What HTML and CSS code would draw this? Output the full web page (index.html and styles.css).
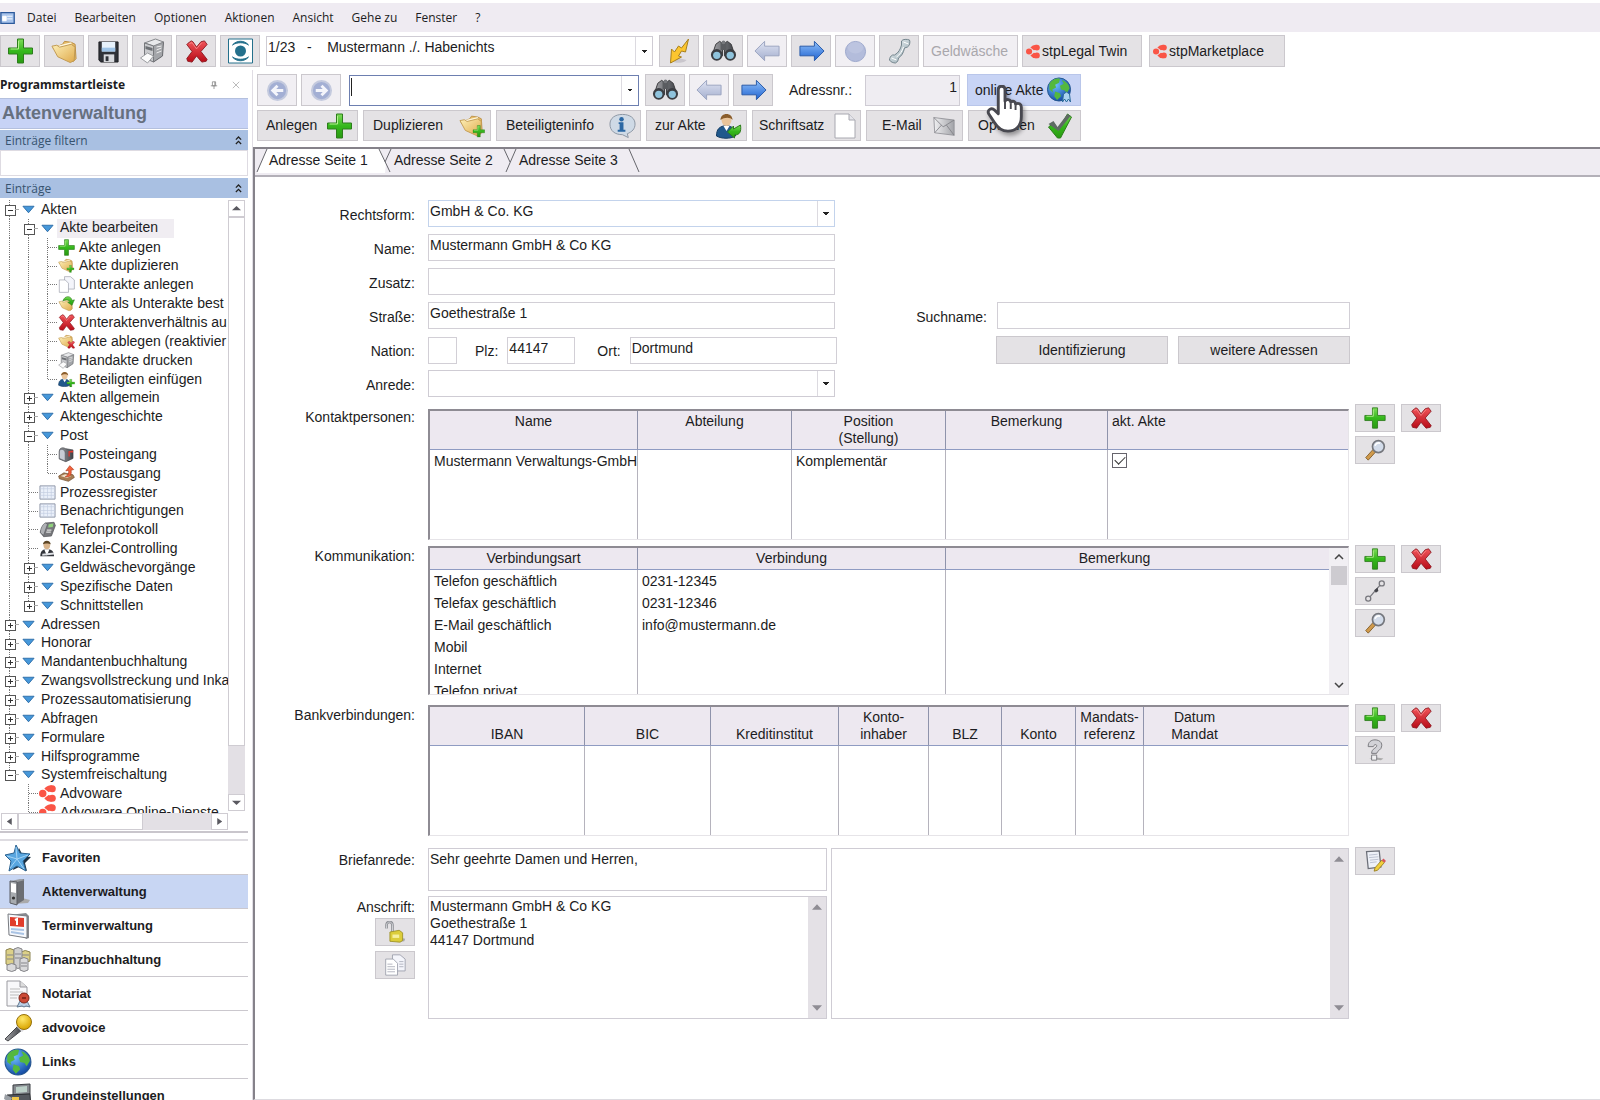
FILE: index.html
```html
<!DOCTYPE html>
<html lang="de">
<head>
  <meta charset="UTF-8">
  <meta name="viewport" content="width=device-width, initial-scale=1.0">
  <title>Aktenverwaltung</title>
  <link rel="stylesheet" href="styles.css">
</head>
<body>
  <!-- icon sprite -->
  <svg class="sprite" width="0" height="0" aria-hidden="true">
    <defs>
      <linearGradient id="gGreen" x1="0" y1="0" x2="0" y2="1"><stop offset="0" stop-color="#7fdc5a"/><stop offset=".5" stop-color="#35b81c"/><stop offset="1" stop-color="#2a9a12"/></linearGradient>
      <linearGradient id="gRed" x1="0" y1="0" x2="0" y2="1"><stop offset="0" stop-color="#f0555a"/><stop offset="1" stop-color="#b80c18"/></linearGradient>
      <linearGradient id="gFolder" x1="0" y1="0" x2="1" y2="1"><stop offset="0" stop-color="#fdf0b8"/><stop offset="1" stop-color="#dfa94a"/></linearGradient>
      <linearGradient id="gBlue" x1="0" y1="0" x2="0" y2="1"><stop offset="0" stop-color="#8fc0fa"/><stop offset="1" stop-color="#1f62d0"/></linearGradient>
      <linearGradient id="gPale" x1="0" y1="0" x2="0" y2="1"><stop offset="0" stop-color="#dfe3f2"/><stop offset="1" stop-color="#a4afcf"/></linearGradient>
      <linearGradient id="gGrey" x1="0" y1="0" x2="1" y2="0"><stop offset="0" stop-color="#f0f0f2"/><stop offset="1" stop-color="#a2a3a8"/></linearGradient>
      <linearGradient id="gDark" x1="0" y1="0" x2="1" y2="0"><stop offset="0" stop-color="#a4a4a8"/><stop offset="1" stop-color="#3e4146"/></linearGradient>
      <linearGradient id="gTube" x1="0" y1="0" x2="1" y2="1"><stop offset="0" stop-color="#f2f7f9"/><stop offset="1" stop-color="#8fa3ac"/></linearGradient>
      <radialGradient id="gSea" cx=".35" cy=".3" r=".8"><stop offset="0" stop-color="#6fc0ff"/><stop offset="1" stop-color="#0b3f9c"/></radialGradient>
      <radialGradient id="gGold" cx=".4" cy=".3" r=".7"><stop offset="0" stop-color="#ffe86a"/><stop offset="1" stop-color="#d9a400"/></radialGradient>
    </defs>
    <symbol id="plus" viewBox="0 0 26 26"><path d="M10 1h6v9h9v6h-9v9h-6v-9H1v-6h9z" fill="url(#gGreen)" stroke="#2d7d1c"/><path d="M11 3v8H3" fill="none" stroke="#b4f090"/></symbol>
    <symbol id="cross" viewBox="0 0 26 26"><path d="M3 4l4-3 2 1 4 6 5-6 4-1 3 4-7 8 7 9-1 2-5 1-6-7-5 7-5-1-1-3 6-8-6-8z" fill="url(#gRed)" stroke="#8a1820" stroke-linejoin="round"/><path d="M5 4l3-1 5 7 6-7" fill="none" stroke="#f99" stroke-width=".8"/></symbol>
    <symbol id="folder" viewBox="0 0 28 26"><path d="M2 10l10-4 2-3 7 1 4 2 1 15-3 3z" fill="#e8bd68" stroke="#b98e45"/><path d="M5 8l16-4 3 14-8 5z" fill="#fff7dc"/><path d="M1 8l5-1 3 2 12-3 4 3-1 14-4 2-13-6z" fill="url(#gFolder)" stroke="#c09850"/></symbol>
    <symbol id="folderPlus" viewBox="0 0 28 26"><use href="#folder" width="26" height="24"/><use href="#plus" x="14" y="12" width="13" height="13"/></symbol>
    <symbol id="folderCross" viewBox="0 0 28 26"><use href="#folder" width="26" height="24"/><use href="#cross" x="15" y="12" width="13" height="13"/></symbol>
    <symbol id="folderArrow" viewBox="0 0 28 26"><use href="#folder" y="3" width="26" height="23"/><path d="M8 9c3-10 14-9 15-1l4-1-4 9-7-5 4-1c-2-3-8-4-12-1z" fill="url(#gGreen)" stroke="#2d7d1c"/></symbol>
    <symbol id="floppy" viewBox="0 0 24 24"><path d="M2 2h20v21H4l-2-2z" fill="#2f3238" stroke="#1c1e22"/><path d="M5 2h14v10H5z" fill="#e6f1fb"/><path d="M5 8h14v4H5z" fill="#9ec4e8"/><path d="M7 15h11v8H7z" fill="#d8dade"/><path d="M9 17h3v5H9z" fill="#2f3238"/></symbol>
    <symbol id="printer" viewBox="0 0 26 26"><path d="M13 7l11-3-1 14-9 6z" fill="#a3a5a9" stroke="#66686c"/><path d="M5 5l11-4 8 3-10 4z" fill="#e8e9eb" stroke="#85878b"/><path d="M5 5l9 3v16l-9-4z" fill="#c9cacd" stroke="#77797d"/><path d="M6 8l7 2v3l-7-2z" fill="#6d7075"/><path d="M1 20l7-5 6 3-6 7z" fill="#fbfbfb" stroke="#9c9ea2"/><path d="M17 9l5-1M17 12l5-2M17 15l5-2" stroke="#eee"/></symbol>
    <symbol id="target" viewBox="0 0 26 26"><path d="M1 1h24v24H1z" fill="#fff" stroke="#24708c"/><circle cx="13" cy="13" r="5.500" fill="#24708c"/><path d="M5 7c4-5 12-5 16 0-4-3-12-3-16 0zM5 19c4 5 12 5 16 0-4 3-12 3-16 0z" fill="#24708c" stroke="#24708c"/></symbol>
    <symbol id="flash" viewBox="0 0 26 26"><path d="M7 24c6 2 12 0 13-2l-8-2z" fill="#c9c6cc"/><path d="M22 1l-3 13-4-1-3 5 3 1-11 6 1-14 3 3 4-6 3 2z" fill="#fcc62f" stroke="#a8801c" stroke-linejoin="round"/></symbol>
    <symbol id="binoc" viewBox="0 0 28 24"><path d="M6 5l4-3 3 2v13H2zM22 5l-4-3-3 2v13h11z" fill="url(#gDark)" stroke="#3a3a3c"/><path d="M11 3h6v8h-6z" fill="#5a5c60"/><circle cx="14" cy="3" r="2" fill="#77797d"/><circle cx="7" cy="16" r="6" fill="#3b3d42"/><circle cx="21" cy="16" r="6" fill="#3b3d42"/><circle cx="7" cy="16.500" r="3.800" fill="#8fc3dc"/><circle cx="21" cy="16.500" r="3.800" fill="#8fc3dc"/></symbol>
    <symbol id="left" viewBox="0 0 28 24"><path d="M1 12L11 2v5h15v10H11v5z" fill="url(#gPale)" stroke="#9aa3c0"/></symbol>
    <symbol id="right" viewBox="0 0 28 24"><path d="M27 12L17 2v5H2v10h15v5z" fill="url(#gBlue)" stroke="#2858a8"/></symbol>
    <symbol id="ball" viewBox="0 0 24 24"><circle cx="12" cy="12" r="10.500" fill="#b3bcdb" stroke="#9ba6cb"/><ellipse cx="12" cy="8" rx="8" ry="6" fill="#bcc4e0"/></symbol>
    <symbol id="back" viewBox="0 0 24 24"><circle cx="12" cy="12" r="10" fill="#a3afd4" stroke="#c4cade" stroke-width="2"/><path d="M18 12H8M12 7l-5 5 5 5" fill="none" stroke="#f4f5fb" stroke-width="3"/></symbol>
    <symbol id="forward" viewBox="0 0 24 24"><circle cx="12" cy="12" r="10" fill="#a3afd4" stroke="#c4cade" stroke-width="2"/><path d="M6 12h10M12 7l5 5-5 5" fill="none" stroke="#f4f5fb" stroke-width="3"/></symbol>
    <symbol id="phone" viewBox="0 0 26 26"><path d="M15 3c1-2 6-2 8-1 1 2 0 6-2 7l-3 1c-1 5-3 8-6 10 0 2-1 4-3 5-2 0-5-1-6-3 0-2 1-4 3-5l2 0c4-2 6-6 7-10z" fill="url(#gTube)" stroke="#74858d"/><path d="M17 4l5 2M5 20l5 2M17 9c-1 4-4 8-7 10" fill="none" stroke="#fff"/></symbol>
    <symbol id="stp" viewBox="0 0 16 16"><circle cx="3.500" cy="8" r="3.500"/><circle cx="12.500" cy="3.500" r="3.300"/><circle cx="12.500" cy="12.500" r="3.300"/><path d="M12 .2A8 8 0 0 0 5 3.500l4 3 4-1zM12 15.800A8 8 0 0 1 5 12.500l4-3 4 1z"/></symbol>
    <symbol id="globe" viewBox="0 0 26 26"><circle cx="13" cy="13" r="12" fill="url(#gSea)" stroke="#24568f"/><path d="M3 7c3-5 8-6 11-5l-1 4-4 2 1 3-4 2 1 3-4-3zM16 3c4 1 8 5 8 9l-3 5-2-3-4-1-1-4 4-2zM9 15l5 2 1 3-4 4-3-4z" fill="#54b83e"/></symbol>
    <symbol id="globeUser" viewBox="0 0 26 26"><use href="#globe" width="25" height="25"/><path d="M16 25l1-8 3-2 3 2 1 8-2-3-2 3-2-3z" fill="#a9d3f0" stroke="#2c6b9c"/></symbol>
    <symbol id="info" viewBox="0 0 28 26"><path d="M14 1c8 0 13 4 13 10 0 5-3 8-8 10l1 4-6-3C6 22 1 18 1 11 1 5 6 1 14 1z" fill="#cfdae6" stroke="#8a95a2"/><circle cx="13" cy="6" r="2.300" fill="#2b68a4"/><path d="M10 9h5v8h2v2h-8v-2h2v-6h-1z" fill="#2b68a4"/></symbol>
    <symbol id="user" viewBox="0 0 26 26"><path d="M1 23c0-7 3-9 7-10h5c5 1 7 4 7 10-5 3-14 3-19 0z" fill="#20588c" stroke="#153c62"/><path d="M8 13l3 5 3-5z" fill="#fff"/><ellipse cx="11" cy="7" rx="5" ry="6" fill="#e9c49a"/><path d="M5 7c0-8 12-8 12 0-2-3-8-3-12 0z" fill="#8a5d2c"/></symbol>
    <symbol id="userArrow" viewBox="0 0 26 26"><use href="#user" width="26" height="26"/><path d="M12 19l6-6v3l7-4c1 7-1 10-6 10v3z" fill="url(#gGreen)" stroke="#2d7d1c"/></symbol>
    <symbol id="userPlus" viewBox="0 0 26 26"><use href="#user" width="24" height="25"/><use href="#plus" x="13" y="12" width="13" height="13"/></symbol>
    <symbol id="suit" viewBox="0 0 26 26"><path d="M2 25c0-8 3-10 7-11h6c5 1 8 4 8 11z" fill="#33363c"/><path d="M8 14h8l-4 10z" fill="#fff"/><path d="M5 21l18-2v3L5 24z" fill="#e0e2e6"/><ellipse cx="12" cy="8" rx="5" ry="6" fill="#d9b48b"/><path d="M6 7c0-8 12-8 12 0-3-2-9-2-12 0z" fill="#5c4524"/></symbol>
    <symbol id="page" viewBox="0 0 22 26"><path d="M1 1h14l6 6v18H1z" fill="#fff" stroke="#a8a8b0"/><path d="M15 1v6h6" fill="#e4e4ea" stroke="#a8a8b0"/></symbol>
    <symbol id="pages" viewBox="0 0 26 26"><path d="M10 1h9l6 5v14H10z" fill="#f4f5fb" stroke="#989ba8"/><path d="M2 6h9l5 5v14H2z" fill="#fff" stroke="#989ba8"/></symbol>
    <symbol id="pagesText" viewBox="0 0 26 26"><use href="#pages" width="26" height="26"/><path d="M4 12h6M4 15h9M4 18h9M4 21h9M18 9h5M18 12h5M18 15h5" stroke="#a8abb8"/></symbol>
    <symbol id="mail" viewBox="0 0 26 24"><path d="M1 2l24 3v18L2 20z" fill="url(#gGrey)" stroke="#909096"/><path d="M1 2l11 11L25 5M2 20l8-9M25 23l-9-12" fill="none" stroke="#808086"/></symbol>
    <symbol id="check" viewBox="0 0 26 26"><path d="M2 14l5-4 5 6L21 1l4 3-11 21h-3z" fill="url(#gGreen)" stroke="#2d7d1c"/><path d="M2 11l5-3 4 6L21 1l3 2-12 15z" fill="#5f6b64"/></symbol>
    <symbol id="lens" viewBox="0 0 26 26"><path d="M2 22l9-10 3 3-9 10z" fill="#d09a4c" stroke="#7c5a28"/><circle cx="17" cy="9" r="7" fill="#d3dcea" stroke="#75777d" stroke-width="2"/><path d="M13 8c1-3 4-4 6-3" fill="none" stroke="#fff" stroke-width="2"/></symbol>
    <symbol id="connect" viewBox="0 0 26 26"><g fill="none" stroke="#77777d" stroke-width="1.500"><circle cx="5" cy="22" r="3"/><circle cx="21" cy="4" r="3"/><path d="M7 20L19 6"/></g><path d="M12 12l4-3 1 4-3 2z" fill="#44444a"/></symbol>
    <symbol id="question" viewBox="0 0 26 26"><path d="M6 23l14 2 3-2-8-1z" fill="#aaa"/><path d="M5 9C4-2 22-1 21 8c0 5-6 6-6 9H9c0-6 6-6 6-9 0-2-3-2-4 1z" fill="#d2d2d7" stroke="#6d6d72"/><path d="M9 19h6v6H9z" fill="#f0f0f2" stroke="#6d6d72"/></symbol>
    <symbol id="note" viewBox="0 0 26 26"><path d="M3 2l15-1 2 19-15 2z" fill="#eef1f8" stroke="#6c6f78" stroke-width="1.500"/><path d="M6 6l10-1M6 9l11-1M7 12l10-1M7 15l8-1" stroke="#b4bacb"/><path d="M13 21l8-9 3 3-8 9-4 1z" fill="#f0cf3c" stroke="#957b1e"/><path d="M21 12l2-2 3 3-2 2z" fill="#d8565c"/></symbol>
    <symbol id="lock" viewBox="0 0 26 26"><path d="M3 9V5c0-5 7-5 7 0v8" fill="none" stroke="#888a90" stroke-width="3"/><path d="M3 9V5c0-5 7-5 7 0v8" fill="none" stroke="#dfe0e4"/><path d="M16 25l8-1 1-3-4-1z" fill="#aaa"/><path d="M7 13l11-2 4 3v9l-3 2-12-1z" fill="#dccd3a" stroke="#9b8f24"/><path d="M10 16h8v4h-8z" fill="#f6f0a0"/></symbol>
    <symbol id="arrow" viewBox="0 0 14 9"><path d="M1 1h12L7 8z" fill="#4698da" stroke="#2c6ca8"/></symbol>
    <symbol id="grid" viewBox="0 0 18 16"><path d="M1 1h16v14H1z" fill="#eaf0fa" stroke="#8c94a6"/><path d="M1 4h16M1 8h16M1 11h16M5 1v14M9 1v14M13 1v14" stroke="#c3cde0" stroke-width=".7"/></symbol>
    <symbol id="mailbox" viewBox="0 0 26 26"><path d="M2 8c0-6 7-6 9-4l12 2v13l-11 5-10-4z" fill="url(#gDark)" stroke="#44464c"/><path d="M2 9c0-6 9-5 9 2v12l-9-4z" fill="#c8ccd4" stroke="#55585e"/><path d="M16 8l7-1v3h-5v6h-2z" fill="#e03a30"/></symbol>
    <symbol id="outbox" viewBox="0 0 26 26"><path d="M1 17l8-5 14 3 2 4-9 6-14-4z" fill="#a67c52" stroke="#6d4c2c"/><path d="M4 17l7-3 9 3-6 3z" fill="#efe0c8"/><path d="M11 18c5-2 6-6 5-10l-4 1 6-8 6 6-4 1c1 7-1 11-9 10z" fill="#f2623c" stroke="#b03a1c"/></symbol>
    <symbol id="telephone" viewBox="0 0 26 26"><path d="M2 17L10 3l13-1 2 5-6 16-12 1z" fill="#77787c" stroke="#4b4d52"/><path d="M2 18c0-6 4-14 8-15l3 2-6 17z" fill="#aeb0b4" stroke="#55575c"/><path d="M15 5l7-1-1 5-7 1z" fill="#8fd07c"/><path d="M12 14h7M11 17h7" stroke="#ddd" stroke-width="2"/></symbol>
    <symbol id="star" viewBox="0 0 28 28"><path d="M15 4l4 8 8 1-6 6 2 8-8-4-6 3z" fill="#1e3040"/><path d="M12 1l4 8 10 1-7 7 3 10-9-5-8 5 2-10-6-6 9-2z" fill="#58a6e0" stroke="#2b618f"/><path d="M12 3l1 12 11-4M13 15l7 10M13 15l-7 9M13 15L3 12" stroke="#a4d4f6" fill="none"/></symbol>
    <symbol id="binder" viewBox="0 0 24 28"><path d="M8 26l14-1 2-3-8-2z" fill="#aaa"/><path d="M10 3l8-2v21l-8 5z" fill="#6b6e73"/><path d="M5 3l9-2 5 1-8 2z" fill="#999ca0"/><path d="M4 3l7 1v23l-7-2z" fill="#a7abaf" stroke="#5a5d62"/><path d="M5 5l5 1v9l-5-1z" fill="#fff"/><circle cx="7.500" cy="20" r="1.600" fill="#333"/></symbol>
    <symbol id="calendar" viewBox="0 0 24 28"><path d="M3 3l17-2 3 3v22l-3 1z" fill="#888a90"/><path d="M2 2l19 2v22L3 23z" fill="#f6f8fc" stroke="#777a80"/><path d="M4 5l14 1v9L4 14z" fill="#e03c2c"/><path d="M9 8l2-1v6" stroke="#fff" stroke-width="2" fill="none"/><path d="M5 17l13 1M5 20l13 2" stroke="#a9c3e4" stroke-width="2"/></symbol>
    <symbol id="coins" viewBox="0 0 28 28"><path d="M2 4q4-3 8 0v14q-4 3-8 0zM17 6q4-3 9 0v9q-5 3-9 0z" fill="#dcd088" stroke="#8c8350"/><path d="M10 3q4-3 8 0v18q-4 3-8 0z" fill="#cfcfd0" stroke="#85858a"/><path d="M3 19q5-3 9 0v5q-4 3-9 0zM16 13q4-3 8 0v11q-4 3-8 0z" fill="#dadadc" stroke="#85858a"/><path d="M11 8h6M11 12h6M17 17h6M17 20h6M3 9h6M3 13h6M18 9h7" stroke="#85858a"/></symbol>
    <symbol id="seal" viewBox="0 0 26 28"><path d="M2 1h13l7 6v19H2z" fill="#f8f8fa" stroke="#9a9aa0"/><path d="M15 1v6h7" fill="#ddd" stroke="#9a9aa0"/><path d="M5 9h10M5 12h13M5 15h9M5 18h7" stroke="#bbb"/><path d="M15 21l-3 6 5-1 2 1 2-1 4 1-3-6z" fill="#b9cfe6" stroke="#61788f"/><circle cx="19" cy="18" r="5" fill="#cc4a36" stroke="#7e2418"/><path d="M17 17h4v2h-4z" fill="#8a2a1c"/></symbol>
    <symbol id="micro" viewBox="0 0 28 28"><path d="M14 12l4 4L4 27l-3-2z" fill="url(#gDark)" stroke="#44464a"/><path d="M12 12l6 6 3-3-6-6z" fill="#d9d9dd"/><circle cx="20" cy="8" r="7.500" fill="url(#gGold)" stroke="#96720c"/></symbol>
    <symbol id="tools" viewBox="0 0 28 28"><path d="M9 3l17-1v10l-17 1z" fill="#85898e" stroke="#3d4045"/><path d="M12 5l11-1v6l-11 1z" fill="#bcd0c8"/><path d="M3 13l23-1 1 14H1z" fill="#54585e" stroke="#2d2f33"/><path d="M8 15h7v8H8z" fill="#f0c748"/><path d="M1 12l7 4-2 4-6-3z" fill="#9ba0a6"/></symbol>
    <symbol id="app" viewBox="0 0 18 14"><path d="M1 1h15v12H1z" fill="#a8c4ec" stroke="#2c5a9c" stroke-width="1.500"/><path d="M3 5h4v5H3zM8 5h6M8 8h6" fill="#fff" stroke="#fff"/></symbol>
  </svg>

  <nav class="menubar">
    <svg class="app-icon"><use href="#app"/></svg>
    <a href="#">Datei</a>
    <a href="#">Bearbeiten</a>
    <a href="#">Optionen</a>
    <a href="#">Aktionen</a>
    <a href="#">Ansicht</a>
    <a href="#">Gehe zu</a>
    <a href="#">Fenster</a>
    <a href="#">?</a>
  </nav>

  <div class="toolbar toolbar-top">
    <button class="tool" aria-label="Neu"><svg><use href="#plus"/></svg></button>
    <button class="tool" aria-label="Öffnen"><svg><use href="#folder"/></svg></button>
    <button class="tool" aria-label="Speichern"><svg class="small"><use href="#floppy"/></svg></button>
    <button class="tool" aria-label="Drucken"><svg><use href="#printer"/></svg></button>
    <button class="tool" aria-label="Löschen"><svg class="small"><use href="#cross"/></svg></button>
    <button class="tool" aria-label="Fokus"><svg><use href="#target"/></svg></button>
    <div class="combo combo-file">
      <select aria-label="Akte"><option>1/23&nbsp;&nbsp; -&nbsp;&nbsp;&nbsp; Mustermann ./. Habenichts</option></select>
    </div>
    <button class="tool" aria-label="Sprung"><svg><use href="#flash"/></svg></button>
    <button class="tool" aria-label="Suchen"><svg><use href="#binoc"/></svg></button>
    <button class="tool off" aria-label="Zurück" disabled><svg><use href="#left"/></svg></button>
    <button class="tool" aria-label="Weiter"><svg><use href="#right"/></svg></button>
    <button class="tool off" aria-label="Status" disabled><svg class="small"><use href="#ball"/></svg></button>
    <button class="tool" aria-label="Telefon"><svg><use href="#phone"/></svg></button>
    <button class="tool-text money off" disabled>Geldwäsche</button>
    <button class="tool-text twin"><svg class="stp"><use href="#stp"/></svg>stpLegal Twin</button>
    <button class="tool-text market"><svg class="stp"><use href="#stp"/></svg>stpMarketplace</button>
  </div>

  <div class="workspace">
    <aside class="sidebar">
      <header class="side-head">
        <h2>Programmstartleiste</h2>
        <svg class="pin" viewBox="0 0 10 10"><path d="M3 1h4v5H3zM6 1v5M1 6h8M5 6v4" fill="none" stroke="#888"/></svg>
        <svg class="close" viewBox="0 0 10 10"><path d="M1 1l8 8M9 1l-8 8" stroke="#aaa"/></svg>
      </header>
      <h1 class="side-title">Aktenverwaltung</h1>
      <div class="side-bar"><label for="filter">Einträge filtern</label><svg viewBox="0 0 8 10"><path d="M1 4l3-3 3 3M1 9l3-3 3 3" fill="none" stroke="#222" stroke-width="1.500"/></svg></div>
      <input class="filter" id="filter" type="text">
      <div class="side-bar"><span>Einträge</span><svg viewBox="0 0 8 10"><path d="M1 4l3-3 3 3M1 9l3-3 3 3" fill="none" stroke="#222" stroke-width="1.500"/></svg></div>

      <div class="tree-box">
        <div class="tree-view">
          <ul class="tree">
            <li><button class="toggle open first" aria-label="Zuklappen"></button><svg><use href="#arrow"/></svg><span>Akten</span></li>
            <li><i class="line"></i><button class="toggle open" aria-label="Zuklappen"></button><svg><use href="#arrow"/></svg><span class="current">Akte bearbeiten</span></li>
            <li><i class="line"></i><i class="line"></i><i class="elbow"></i><svg class="big"><use href="#plus"/></svg><span>Akte anlegen</span></li>
            <li><i class="line"></i><i class="line"></i><i class="elbow"></i><svg class="big"><use href="#folderPlus"/></svg><span>Akte duplizieren</span></li>
            <li><i class="line"></i><i class="line"></i><i class="elbow"></i><svg class="big"><use href="#pages"/></svg><span>Unterakte anlegen</span></li>
            <li><i class="line"></i><i class="line"></i><i class="elbow"></i><svg class="big"><use href="#folderArrow"/></svg><span>Akte als Unterakte best</span></li>
            <li><i class="line"></i><i class="line"></i><i class="elbow"></i><svg class="big"><use href="#cross"/></svg><span>Unteraktenverhältnis au</span></li>
            <li><i class="line"></i><i class="line"></i><i class="elbow"></i><svg class="big"><use href="#folderCross"/></svg><span>Akte ablegen (reaktivier</span></li>
            <li><i class="line"></i><i class="line"></i><i class="elbow"></i><svg class="big"><use href="#printer"/></svg><span>Handakte drucken</span></li>
            <li><i class="line"></i><i class="line"></i><i class="elbow last"></i><svg class="big"><use href="#userPlus"/></svg><span>Beteiligten einfügen</span></li>
            <li><i class="line"></i><button class="toggle" aria-label="Aufklappen"></button><svg><use href="#arrow"/></svg><span>Akten allgemein</span></li>
            <li><i class="line"></i><button class="toggle" aria-label="Aufklappen"></button><svg><use href="#arrow"/></svg><span>Aktengeschichte</span></li>
            <li><i class="line"></i><button class="toggle open" aria-label="Zuklappen"></button><svg><use href="#arrow"/></svg><span>Post</span></li>
            <li><i class="line"></i><i class="line"></i><i class="elbow"></i><svg class="big"><use href="#mailbox"/></svg><span>Posteingang</span></li>
            <li><i class="line"></i><i class="line"></i><i class="elbow last"></i><svg class="big"><use href="#outbox"/></svg><span>Postausgang</span></li>
            <li><i class="line"></i><i class="elbow"></i><svg class="big"><use href="#grid"/></svg><span>Prozessregister</span></li>
            <li><i class="line"></i><i class="elbow"></i><svg class="big"><use href="#grid"/></svg><span>Benachrichtigungen</span></li>
            <li><i class="line"></i><i class="elbow"></i><svg class="big"><use href="#telephone"/></svg><span>Telefonprotokoll</span></li>
            <li><i class="line"></i><i class="elbow"></i><svg class="big"><use href="#suit"/></svg><span>Kanzlei-Controlling</span></li>
            <li><i class="line"></i><button class="toggle" aria-label="Aufklappen"></button><svg><use href="#arrow"/></svg><span>Geldwäschevorgänge</span></li>
            <li><i class="line"></i><button class="toggle" aria-label="Aufklappen"></button><svg><use href="#arrow"/></svg><span>Spezifische Daten</span></li>
            <li><i class="line"></i><button class="toggle end" aria-label="Aufklappen"></button><svg><use href="#arrow"/></svg><span>Schnittstellen</span></li>
            <li><button class="toggle" aria-label="Aufklappen"></button><svg><use href="#arrow"/></svg><span>Adressen</span></li>
            <li><button class="toggle" aria-label="Aufklappen"></button><svg><use href="#arrow"/></svg><span>Honorar</span></li>
            <li><button class="toggle" aria-label="Aufklappen"></button><svg><use href="#arrow"/></svg><span>Mandantenbuchhaltung</span></li>
            <li><button class="toggle" aria-label="Aufklappen"></button><svg><use href="#arrow"/></svg><span>Zwangsvollstreckung und Inka</span></li>
            <li><button class="toggle" aria-label="Aufklappen"></button><svg><use href="#arrow"/></svg><span>Prozessautomatisierung</span></li>
            <li><button class="toggle" aria-label="Aufklappen"></button><svg><use href="#arrow"/></svg><span>Abfragen</span></li>
            <li><button class="toggle" aria-label="Aufklappen"></button><svg><use href="#arrow"/></svg><span>Formulare</span></li>
            <li><button class="toggle" aria-label="Aufklappen"></button><svg><use href="#arrow"/></svg><span>Hilfsprogramme</span></li>
            <li><button class="toggle open end" aria-label="Zuklappen"></button><svg><use href="#arrow"/></svg><span>Systemfreischaltung</span></li>
            <li><i></i><i class="elbow"></i><svg class="big stp"><use href="#stp"/></svg><span>Advoware</span></li>
            <li><i></i><i class="elbow"></i><svg class="big stp"><use href="#stp"/></svg><span>Advoware Online-Dienste</span></li>
          </ul>
        </div>
        <div class="vscroll"><i class="cap up"></i><i class="thumb"></i><i class="track"></i><i class="cap down"></i></div>
        <div class="hscroll"><i class="cap prev"></i><i class="thumb"></i><i class="track"></i><i class="cap next"></i></div>
      </div>

      <nav class="modules">
        <a href="#"><svg><use href="#star"/></svg>Favoriten</a>
        <a href="#" class="active"><svg><use href="#binder"/></svg>Aktenverwaltung</a>
        <a href="#"><svg><use href="#calendar"/></svg>Terminverwaltung</a>
        <a href="#"><svg><use href="#coins"/></svg>Finanzbuchhaltung</a>
        <a href="#"><svg><use href="#seal"/></svg>Notariat</a>
        <a href="#"><svg><use href="#micro"/></svg>advovoice</a>
        <a href="#"><svg><use href="#globe"/></svg>Links</a>
        <a href="#"><svg><use href="#tools"/></svg>Grundeinstellungen</a>
      </nav>
    </aside>

    <main class="main">
      <div class="toolbar toolbar-search">
        <button class="tool off" aria-label="Zurück" disabled><svg class="small"><use href="#back"/></svg></button>
        <button class="tool off" aria-label="Vor" disabled><svg class="small"><use href="#forward"/></svg></button>
        <div class="combo combo-search"><input type="text" aria-label="Adresse suchen"></div>
        <button class="tool" aria-label="Suchen"><svg><use href="#binoc"/></svg></button>
        <button class="tool off" aria-label="Vorherige" disabled><svg><use href="#left"/></svg></button>
        <button class="tool" aria-label="Nächste"><svg><use href="#right"/></svg></button>
        <label class="nr-label" for="nr">Adressnr.:</label>
        <input class="nr" id="nr" type="text" value="1" readonly>
        <div class="online">
          <button class="tool-text hover">online Akte<svg><use href="#globeUser"/></svg></button>
          <svg class="pointer" viewBox="0 0 38 50"><path d="M12 5c0-5 7-5 7 0v12c1-3 6-2 6 1 2-2 5-1 5 2 3-2 6 0 6 3v10c0 10-6 15-14 15-7 0-11-4-14-9L2 30c-2-4 3-7 6-4l4 4z" fill="#fff" stroke="#484850" stroke-width="3" stroke-linejoin="round"/><path d="M19 17v8M25 19v6M30 21v5" stroke="#484850" stroke-width="2"/></svg>
        </div>
      </div>
      <div class="toolbar toolbar-actions">
        <button class="tool-text w1">Anlegen<svg><use href="#plus"/></svg></button>
        <button class="tool-text w2">Duplizieren<svg><use href="#folderPlus"/></svg></button>
        <button class="tool-text w3">Beteiligteninfo<svg><use href="#info"/></svg></button>
        <button class="tool-text w1">zur Akte<svg><use href="#userArrow"/></svg></button>
        <button class="tool-text w4">Schriftsatz<svg><use href="#page"/></svg></button>
        <button class="tool-text w5">E-Mail<svg><use href="#mail"/></svg></button>
        <button class="tool-text w6">Optionen<svg><use href="#check"/></svg></button>
      </div>

      <div class="panel">
        <div class="tabs">
          <svg class="edge first" viewBox="0 0 14 24"><path d="M14 0v24H2L12 0z" fill="#fff"/><path d="M2 23L12 0" stroke="#66666c" fill="none"/></svg>
          <button class="tab active">Adresse Seite 1</button>
          <svg class="edge" viewBox="0 0 14 24"><path d="M0 0h2l6 15-1 9H0z" fill="#fff"/><path d="M1 0l11 23M13 0L7 13" stroke="#66666c" fill="none"/></svg>
          <button class="tab">Adresse Seite 2</button>
          <svg class="edge" viewBox="0 0 14 24"><path d="M1 0l6 13M13 0L3 23" stroke="#66666c" fill="none"/></svg>
          <button class="tab">Adresse Seite 3</button>
          <svg class="edge" viewBox="0 0 14 24"><path d="M1 0l10 23" stroke="#66666c" fill="none"/></svg>
        </div>

        <form class="form">
          <div class="row">
            <label for="rechtsform">Rechtsform:</label>
            <div class="fields"><div class="combo focus"><select id="rechtsform"><option>GmbH &amp; Co. KG</option></select></div></div>
          </div>
          <div class="row">
            <label for="name">Name:</label>
            <div class="fields"><input id="name" type="text" value="Mustermann GmbH &amp; Co KG"></div>
          </div>
          <div class="row">
            <label for="zusatz">Zusatz:</label>
            <div class="fields"><input id="zusatz" type="text"></div>
          </div>
          <div class="row">
            <label for="strasse">Straße:</label>
            <div class="fields"><input id="strasse" type="text" value="Goethestraße 1"></div>
            <div class="side">
              <label for="suchname">Suchname:</label>
              <input id="suchname" type="text">
            </div>
          </div>
          <div class="row">
            <label for="nation">Nation:</label>
            <div class="fields wide">
              <input class="nation" id="nation" type="text">
              <label for="plz">Plz:</label>
              <input class="plz" id="plz" type="text" value="44147">
              <label class="ort-label" for="ort">Ort:</label>
              <input class="ort" id="ort" type="text" value="Dortmund">
            </div>
            <div class="side">
              <button type="button" class="plain">Identifizierung</button>
              <button type="button" class="plain">weitere Adressen</button>
            </div>
          </div>
          <div class="row">
            <label for="anrede">Anrede:</label>
            <div class="fields"><div class="combo"><select id="anrede"><option></option></select></div></div>
          </div>

          <div class="block contacts">
            <div class="caption">Kontaktpersonen:</div>
            <div class="grid-box">
              <table>
                <colgroup><col class="c208"><col class="c154"><col class="c154"><col class="c162"><col></colgroup>
                <thead><tr><th>Name</th><th>Abteilung</th><th>Position<br>(Stellung)</th><th>Bemerkung</th><th class="start">akt. Akte</th></tr></thead>
                <tbody>
                  <tr><td>Mustermann Verwaltungs-GmbH</td><td></td><td>Komplementär</td><td></td><td><input type="checkbox" aria-label="akt. Akte" checked></td></tr>
                  <tr class="rest"><td></td><td></td><td></td><td></td><td></td></tr>
                </tbody>
              </table>
            </div>
            <div class="acts">
              <button type="button" aria-label="Hinzufügen"><svg><use href="#plus"/></svg></button>
              <button type="button" aria-label="Entfernen"><svg><use href="#cross"/></svg></button>
              <button type="button" aria-label="Ansehen"><svg><use href="#lens"/></svg></button>
            </div>
          </div>

          <div class="block comms">
            <div class="caption">Kommunikation:</div>
            <div class="grid-box">
              <table>
                <colgroup><col class="c208"><col class="c308"><col></colgroup>
                <thead><tr><th>Verbindungsart</th><th>Verbindung</th><th class="remark">Bemerkung</th></tr></thead>
                <tbody>
                  <tr><td>Telefon geschäftlich</td><td>0231-12345</td><td></td></tr>
                  <tr><td>Telefax geschäftlich</td><td>0231-12346</td><td></td></tr>
                  <tr><td>E-Mail geschäftlich</td><td>info@mustermann.de</td><td></td></tr>
                  <tr><td>Mobil</td><td></td><td></td></tr>
                  <tr><td>Internet</td><td></td><td></td></tr>
                  <tr><td>Telefon privat</td><td></td><td></td></tr>
                </tbody>
              </table>
              <div class="flatscroll">
                <svg viewBox="0 0 10 6"><path d="M1 5l4-4 4 4" fill="none" stroke="#444" stroke-width="1.500"/></svg>
                <i></i>
                <svg class="bottom" viewBox="0 0 10 6"><path d="M1 1l4 4 4-4" fill="none" stroke="#444" stroke-width="1.500"/></svg>
              </div>
            </div>
            <div class="acts">
              <button type="button" aria-label="Hinzufügen"><svg><use href="#plus"/></svg></button>
              <button type="button" aria-label="Entfernen"><svg><use href="#cross"/></svg></button>
              <button type="button" class="solo" aria-label="Verbinden"><svg><use href="#connect"/></svg></button>
              <button type="button" aria-label="Ansehen"><svg><use href="#lens"/></svg></button>
            </div>
          </div>

          <div class="block bank">
            <div class="caption">Bankverbindungen:</div>
            <div class="grid-box">
              <table>
                <colgroup><col class="c155"><col class="c126"><col class="c128"><col class="c90"><col class="c73"><col class="c74"><col class="c68"><col></colgroup>
                <thead><tr><th>IBAN</th><th>BIC</th><th>Kreditinstitut</th><th>Konto-<br>inhaber</th><th>BLZ</th><th>Konto</th><th>Mandats-<br>referenz</th><th class="date">Datum<br>Mandat</th></tr></thead>
                <tbody><tr class="rest"><td></td><td></td><td></td><td></td><td></td><td></td><td></td><td></td></tr></tbody>
              </table>
            </div>
            <div class="acts">
              <button type="button" aria-label="Hinzufügen"><svg><use href="#plus"/></svg></button>
              <button type="button" aria-label="Entfernen"><svg><use href="#cross"/></svg></button>
              <button type="button" aria-label="Hilfe"><svg><use href="#question"/></svg></button>
            </div>
          </div>

          <div class="block letter">
            <div class="caption">
              <label class="brief-label" for="brief">Briefanrede:</label>
              <label for="anschrift">Anschrift:</label>
              <button type="button" aria-label="Entsperren"><svg><use href="#lock"/></svg></button>
              <button type="button" aria-label="Kopieren"><svg><use href="#pagesText"/></svg></button>
            </div>
            <div class="texts">
              <div class="texts-left">
                <textarea class="brief" id="brief">Sehr geehrte Damen und Herren,</textarea>
                <div class="memo">
                  <textarea id="anschrift">Mustermann GmbH &amp; Co KG
Goethestraße 1
44147 Dortmund</textarea>
                  <div class="memo-scroll"><i class="up"></i><i class="down"></i></div>
                </div>
              </div>
              <div class="memo">
                <textarea aria-label="Notiz"></textarea>
                <div class="memo-scroll"><i class="up"></i><i class="down"></i></div>
              </div>
            </div>
            <div class="acts">
              <button type="button" aria-label="Bearbeiten"><svg><use href="#note"/></svg></button>
            </div>
          </div>
        </form>
      </div>
    </main>
  </div>
</body>
</html>
```

FILE: styles.css
```css
* {
  box-sizing: border-box;
}

body {
  margin: 0;
  height: 100vh;
  display: flex;
  flex-direction: column;
  overflow: hidden;
  background: #fff;
  color: #1c1c22;
  font-family: "Liberation Sans", Arial, sans-serif;
  font-size: 14px;
  line-height: 17px;
}

button,
input,
select,
textarea {
  font: inherit;
  color: inherit;
  margin: 0;
  border-radius: 0;
}

a {
  color: inherit;
  text-decoration: none;
}

.sprite {
  position: absolute;
}

/* menu */
.menubar {
  display: flex;
  align-items: center;
  gap: 18px;
  height: 29px;
  flex: none;
  margin-top: 3px;
  background: #efebf2;
  font-family: "Open Sans", "Noto Sans", sans-serif;
  font-size: 12px;
}

.app-icon {
  width: 16px;
  height: 14px;
  margin-right: -7px;
}

/* toolbars */
.toolbar {
  display: flex;
  align-items: center;
  gap: 4px;
  flex: none;
}

.toolbar-top {
  padding: 3px 0;
}

.tool,
.tool-text,
.plain,
.acts button,
.caption button {
  display: flex;
  align-items: center;
  justify-content: center;
  padding: 0;
  border: 1px solid #cbc8cd;
  background: #e4e2e5;
}

.tool {
  width: 40px;
  height: 32px;
  flex: none;
}

.tool svg,
.tool-text svg {
  width: 27px;
  height: 26px;
}

.tool .small {
  height: 23px;
}

.tool-text {
  height: 32px;
  justify-content: space-between;
  padding: 0 4px 0 8px;
  white-space: nowrap;
}

.tool.off,
.tool-text.off {
  background: #f1eff3;
  color: #a9a7ac;
}

.money {
  width: 95px;
  padding: 0 7px;
}

.stp {
  fill: #fa5546;
}

.tool-text .stp {
  width: 14px;
  height: 15px;
}

.twin,
.market {
  justify-content: flex-start;
  gap: 2px;
  padding-left: 3px;
}

.twin {
  width: 120px;
}

.market {
  width: 136px;
  margin-left: 3px;
}

.combo {
  position: relative;
  display: flex;
  border: 1px solid #cfccd4;
  background: #fff;
}

/* drop-down arrow with its divider */
.combo::after {
  content: "";
  position: absolute;
  top: 0;
  bottom: 0;
  right: 0;
  width: 16px;
  border-left: 1px solid #dcdae0;
  background: conic-gradient(from -45deg at 50% 100%, #222 90deg, transparent 0) center / 6px 3px no-repeat;
  pointer-events: none;
}

.combo select,
.combo input {
  appearance: none;
  flex: 1;
  min-width: 0;
  border: 0;
  background: none;
  padding: 0 18px 4px 1px;
  outline: 0;
}

.combo-file {
  width: 387px;
  height: 30px;
  margin: 0 2px;
}

.combo-file select {
  padding-bottom: 7px;
}

.combo-search {
  width: 290px;
  height: 31px;
  margin: 0 2px 0 4px;
  border-color: #6d7fb0;
}

.combo-search::before {
  content: "";
  width: 1px;
  height: 18px;
  margin: 2px 0 0 1px;
  background: #222;
}

.focus {
  border-color: #c3d3ec;
}

.toolbar-search {
  height: 32px;
  margin: 4px 0 4px 4px;
}

.nr-label {
  margin: 0 9px 0 12px;
}

.nr {
  width: 95px;
  height: 31px;
  padding: 0 2px 7px;
  border: 1px solid #cfccd4;
  background: #efedf2;
  text-align: right;
}

.online {
  position: relative;
}

.online .tool-text {
  width: 114px;
  margin-left: 3px;
  padding-left: 7px;
}

.hover {
  background: #c8d4f5;
  border-color: #b9c6ea;
}

.pointer {
  position: absolute;
  left: 22px;
  top: 11px;
  width: 38px;
  height: 48px;
  filter: drop-shadow(2px 3px 2px rgba(0, 0, 0, 0.35));
  z-index: 2;
}

.toolbar-actions {
  margin-left: 4px;
  gap: 5px;
}

.toolbar-actions .tool-text {
  height: 31px;
}

.w1 { width: 101px; }
.w2 { width: 128px; }
.w3 { width: 145px; }
.w4 { width: 109px; }
.w5 { width: 97px; }
.w6 { width: 113px; }

.toolbar-actions .w2,
.toolbar-actions .w3,
.toolbar-actions .w6 {
  padding-left: 9px;
}

.toolbar-actions .w5 {
  padding-left: 15px;
}

.toolbar-actions .w4 {
  padding-left: 6px;
}

.w6 svg,
.hover svg,
.w5 svg {
  margin-right: 3px;
}

.w5 svg,
.w4 svg {
  width: 22px;
}

/* workspace */
.workspace {
  display: flex;
  flex: 1;
  min-height: 0;
}

.sidebar {
  display: flex;
  flex-direction: column;
  width: 253px;
  flex: none;
  padding-right: 4px;
  border-right: 1px solid #e0dde4;
  overflow: hidden;
}

.side-head {
  display: flex;
  align-items: center;
  height: 28px;
  flex: none;
  padding: 2px 8px 0 0;
}

.side-head h2 {
  flex: 1;
  margin: 0;
  font: bold 12px/18px "Noto Sans", sans-serif;
}

.side-head svg {
  width: 8px;
  height: 8px;
  margin-left: 14px;
}

.side-title {
  flex: none;
  height: 31px;
  margin: 0 0 1px;
  padding: 4px 2px;
  border: 1px solid #b4c0de;
  border-width: 1px 0;
  background: #c7d3f6;
  color: #66707f;
  font-size: 18px;
  line-height: 21px;
}

.side-bar {
  display: flex;
  align-items: center;
  justify-content: space-between;
  height: 20px;
  flex: none;
  padding: 0 6px 0 5px;
  background: #a9c0e2;
  color: #37536f;
  font-family: "Open Sans", "Noto Sans", sans-serif;
  font-size: 12px;
}

.side-bar svg {
  width: 7px;
  height: 9px;
}

.filter {
  height: 26px;
  flex: none;
  margin-bottom: 2px;
  border: 1px solid #dedbe2;
}

.tree-box {
  display: grid;
  grid-template: minmax(0, 1fr) 18px / minmax(0, 1fr) 20px;
  height: 635px;
  flex: none;
  border-bottom: 2px solid #c9c6cc;
}

.tree-view {
  overflow: hidden;
  padding-top: 2px;
}

.tree {
  display: grid;
  grid-auto-rows: 1fr;
  height: 622px;
  margin: 0;
  padding: 0;
  list-style: none;
  white-space: nowrap;
}

.tree li {
  display: flex;
  align-items: center;
  min-height: 0;
}

.tree svg {
  width: 13px;
  height: 9px;
  margin: 0 3px;
  flex: none;
}

.tree .big {
  width: 17px;
  height: 17px;
  margin: 0 1px;
}

.tree span {
  padding-left: 3px;
}

.tree .current {
  align-self: stretch;
  padding-right: 16px;
  background: #f0edf2;
}

.tree i,
.toggle {
  position: relative;
  align-self: stretch;
  width: 19px;
  flex: none;
}

.tree .line,
.tree .elbow,
.toggle {
  background: repeating-linear-gradient(#777 0 1px, transparent 1px 2px) 9px 0 / 1px 100% no-repeat;
}

.tree .last,
.tree .end {
  background-size: 1px 50%;
}

.tree .first {
  background-position: 9px 100%;
}

.tree .elbow::after {
  content: "";
  position: absolute;
  left: 10px;
  right: 0;
  top: 9px;
  height: 1px;
  background: repeating-linear-gradient(90deg, #777 0 1px, transparent 1px 2px);
}

.toggle {
  border: 0;
  padding: 0;
}

.toggle::before {
  content: "";
  position: absolute;
  left: 5px;
  top: 5px;
  width: 9px;
  height: 9px;
  border: 1px solid #555;
  background: linear-gradient(#333, #333) center / 5px 1px no-repeat, linear-gradient(#333, #333) center / 1px 5px no-repeat, #fff;
}

.toggle.open::before {
  background: linear-gradient(#333, #333) center / 5px 1px no-repeat, #fff;
}

.toggle::after {
  content: "";
  position: absolute;
  left: 15px;
  right: 0;
  top: 9px;
  height: 1px;
  background: #aaa;
}

/* classic scroll bars */
.vscroll,
.hscroll {
  display: flex;
  background: #e3e0e5;
}

.vscroll {
  flex-direction: column;
  width: 17px;
  margin: 2px 3px 2px 0;
}

.hscroll {
  margin-left: 1px;
  height: 17px;
}

.cap {
  position: relative;
  width: 17px;
  height: 17px;
  flex: none;
  border: 1px solid #cfccd2;
  background: #fff;
}

.cap::after {
  content: "";
  position: absolute;
  inset: 4px 3px;
  background: #5a5960;
}

.up::after { clip-path: polygon(50% 15%, 100% 75%, 0 75%); }
.down::after { clip-path: polygon(0 25%, 100% 25%, 50% 85%); }
.prev::after { clip-path: polygon(75% 0, 75% 100%, 20% 50%); }
.next::after { clip-path: polygon(25% 0, 80% 50%, 25% 100%); }

.thumb {
  border: 1px solid #cfccd2;
  background: #fff;
}

.vscroll .thumb {
  flex: 529;
}

.vscroll .track {
  flex: 48;
}

.hscroll .thumb {
  flex: 124;
}

.hscroll .track {
  flex: 68;
}

.modules {
  display: flex;
  flex-direction: column;
  margin-top: 6px;
  border-top: 2px solid #dedce1;
  font-size: 13px;
}

.modules a {
  display: flex;
  align-items: center;
  gap: 10px;
  height: 34px;
  flex: none;
  padding-left: 4px;
  border-bottom: 1px solid #cbc8ce;
  font-weight: bold;
}

.modules .active {
  background: #c8d6f3;
}

.modules svg {
  width: 28px;
  height: 28px;
}

/* main area */
.main {
  display: flex;
  flex-direction: column;
  flex: 1;
  min-width: 0;
}

.panel {
  display: flex;
  flex-direction: column;
  flex: 1;
  min-height: 0;
  margin-top: 6px;
  border: solid #85828a;
  border-width: 2px 0 1px 2px;
  border-bottom-color: #dddbe0;
}

.tabs {
  display: flex;
  flex: none;
  height: 28px;
  border-bottom: 2px solid #b3b0b8;
  background: #efecf2;
}

.edge {
  width: 14px;
  height: 24px;
  flex: none;
}

.tab + .edge {
  margin-right: 2px;
}

.tab {
  width: 109px;
  height: 24px;
  padding: 0 0 2px;
  border: 0;
  background: none;
  text-align: left;
}

.tab.active {
  background: #fff;
}

.form {
  display: flex;
  flex-direction: column;
  gap: 7px;
  padding: 23px 12px 0 0;
}

.row,
.block {
  display: grid;
  grid-template-columns: 160px minmax(0, 409px) minmax(0, 512px);
  column-gap: 13px;
}

.row {
  align-items: center;
  height: 27px;
}

.row label {
  padding-top: 3px;
}

.row > label,
.caption {
  text-align: right;
}

.fields {
  display: flex;
  align-items: center;
  width: 407px;
}

.fields.wide {
  width: 409px;
}

.fields > input,
.fields > .combo {
  flex: 1;
}

.row input,
.row .combo {
  height: 27px;
}

.row input {
  min-width: 0;
  padding: 0 1px 5px;
  border: 1px solid #d2cfd6;
}

.fields .nation {
  flex: none;
  width: 29px;
  margin-right: 18px;
}

.fields .plz {
  flex: none;
  width: 68px;
  margin: 0 22px 0 9px;
}

.fields .ort {
  margin-left: 9px;
}

.side {
  display: flex;
  align-items: center;
  justify-content: flex-end;
  gap: 10px;
  padding-right: 12px;
}

.side input {
  width: 353px;
}

.plain {
  width: 172px;
  height: 28px;
  flex: none;
}

.block {
  grid-template-columns: 160px minmax(0, 921px) 86px;
}

.contacts {
  margin-top: 5px;
}

.contacts .grid-box { height: 131px; }
.comms { margin-top: -1px; }
.comms .grid-box { height: 149px; }
.bank { margin-top: 3px; }
.bank .grid-box { height: 131px; }
.letter { margin-top: 5px; }

.grid-box {
  display: flex;
  border: 1px solid #e6e4e8;
  border-top: 2px solid #8e8b93;
  border-left: 2px solid #8e8b93;
  overflow: hidden;
}

.caption {
  display: flex;
  flex-direction: column;
  align-items: flex-end;
}

table {
  flex: 1;
  width: 100%;
  table-layout: fixed;
  border-collapse: separate;
  border-spacing: 0;
}

.contacts table,
.bank table {
  height: 100%;
}

.c208 { width: 208px; }
.c154 { width: 154px; }
.c162 { width: 162px; }
.c308 { width: 308px; }
.c155 { width: 155px; }
.c126 { width: 126px; }
.c128 { width: 128px; }
.c90 { width: 90px; }
.c73 { width: 73px; }
.c74 { width: 74px; }
.c68 { width: 68px; }

th {
  padding: 2px 0;
  border-right: 1px solid #8f93ab;
  border-bottom: 1px solid #8f9bc2;
  background: #ede8f0;
  font-weight: normal;
  vertical-align: top;
}

td {
  height: 22px;
  padding: 3px 0 2px 4px;
  border-right: 1px solid #b5b3bd;
  overflow: hidden;
  white-space: nowrap;
  vertical-align: top;
}

th:last-child,
td:last-child {
  border-right: 0;
}

.start {
  padding-left: 4px;
  text-align: left;
}

.comms th.remark {
  padding-right: 46px;
}

.bank th {
  vertical-align: bottom;
}

.bank th.date {
  padding-right: 103px;
}

.rest td {
  height: auto;
  padding: 0;
}

.contacts .rest td {
  height: 66px;
}

.bank .rest td {
  height: 89px;
}

input[type="checkbox"] {
  appearance: none;
  display: block;
  width: 15px;
  height: 15px;
  border: 1px solid #66646c;
}

input[type="checkbox"]:checked::before {
  content: "";
  display: block;
  width: 9px;
  height: 5px;
  margin: 2px 0 0 2px;
  border: solid #333;
  border-width: 0 0 1px 1px;
  rotate: -45deg;
}

.flatscroll {
  display: flex;
  flex-direction: column;
  align-items: center;
  width: 19px;
  flex: none;
  padding: 6px 0;
  background: #f1eff3;
}

.flatscroll svg {
  width: 10px;
  height: 6px;
}

.flatscroll i {
  width: 16px;
  height: 19px;
  margin-top: 6px;
  background: #cdcbd0;
}

.flatscroll .bottom {
  margin-top: auto;
}

.acts {
  display: flex;
  flex-wrap: wrap;
  align-content: flex-start;
  gap: 4px 6px;
  margin: -1px 0 0 -7px;
}

.contacts .acts {
  margin-top: -5px;
}

.acts button,
.caption button {
  width: 40px;
  height: 28px;
}

.acts svg,
.caption svg {
  width: 22px;
  height: 22px;
}

.acts .solo {
  margin-right: 46px;
}

.comms .caption,
.bank .caption {
  padding-top: 2px;
}

/* letter block */
.letter .caption {
  gap: 5px;
  padding-top: 4px;
}

.letter .caption .brief-label {
  margin-bottom: 25px;
}

.letter .caption label + button {
  margin-top: -3px;
}

.texts {
  display: flex;
  gap: 4px;
  height: 171px;
}

.texts-left {
  display: flex;
  flex-direction: column;
  gap: 5px;
  width: 399px;
  flex: none;
}

textarea {
  display: block;
  padding: 2px 1px;
  border: 1px solid #cfccd4;
  resize: none;
  overflow: hidden;
  outline: 0;
}

.brief {
  height: 43px;
}

.memo {
  display: flex;
  flex: 1;
  border: 1px solid #cfccd4;
}

.memo textarea {
  flex: 1;
  min-width: 0;
  padding-top: 1px;
  border: 0;
}

.memo-scroll {
  display: flex;
  flex-direction: column;
  justify-content: space-between;
  width: 18px;
  padding: 2px 0;
  background: #e4e1e6;
}

.memo-scroll i {
  position: relative;
  height: 17px;
}

.memo-scroll i::after {
  content: "";
  position: absolute;
  inset: 4px;
  background: #8f8d94;
}
```
